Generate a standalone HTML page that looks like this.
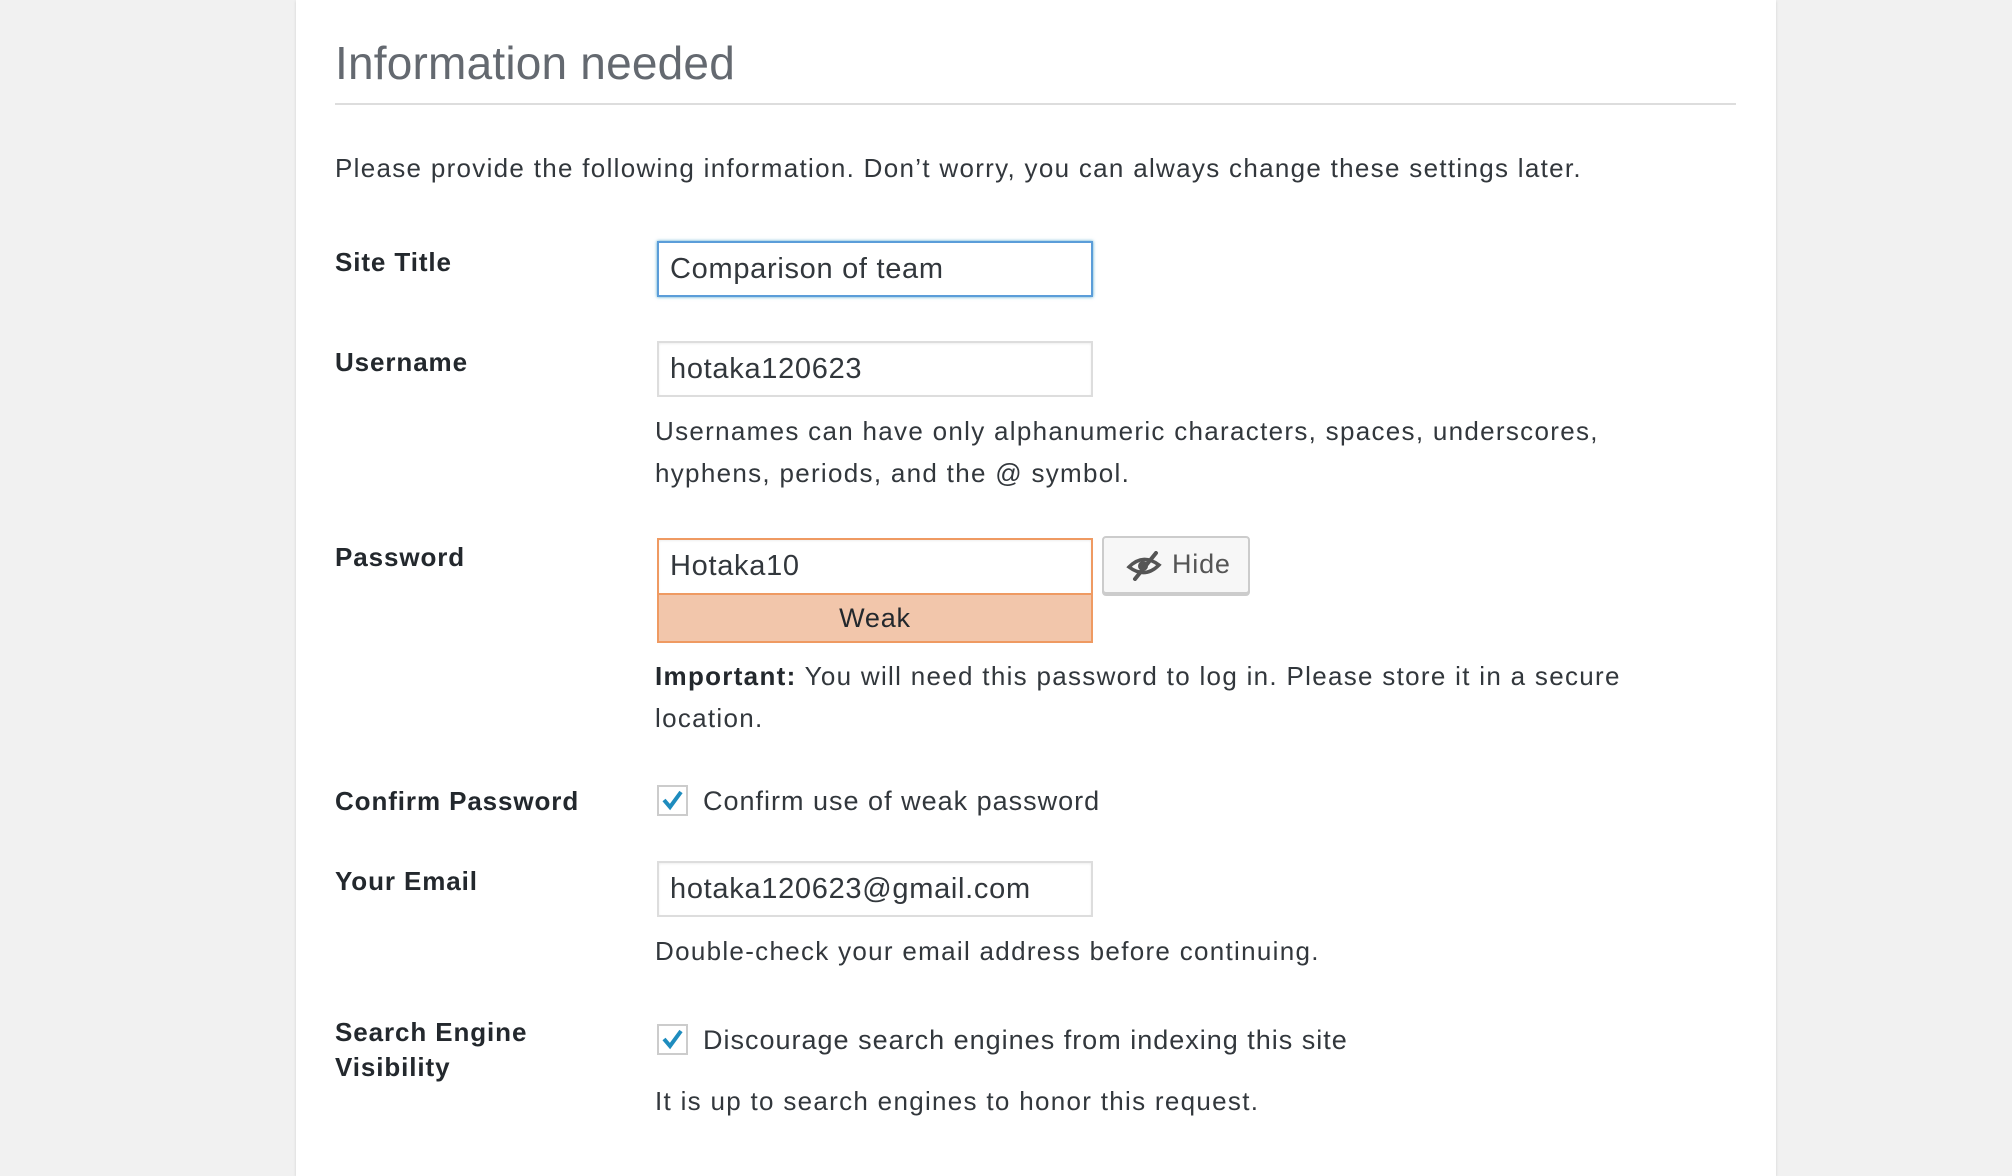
<!DOCTYPE html>
<html><head><meta charset="utf-8"><style>
body{margin:0;width:2012px;height:1176px;background:#f1f1f1;font-family:"Liberation Sans",sans-serif;color:#32373c;position:relative;overflow:hidden}
.panel{position:absolute;left:296px;top:0;width:1480px;height:1176px;background:#fff;box-shadow:0 1px 3px rgba(0,0,0,.13)}
.t{position:absolute;font-size:26px;line-height:1;white-space:nowrap;letter-spacing:1.3px}
.b{font-weight:bold;color:#23282d;letter-spacing:0.9px}
.in{position:absolute;left:657px;width:436px;height:56px;box-sizing:border-box;border:2px solid #ddd;background:#fff;font-size:29px;padding-left:11px;line-height:52px;color:#32373c;letter-spacing:0.7px;box-shadow:inset 0 1px 2px rgba(0,0,0,.07)}
.cb{position:absolute;left:657px;width:31px;height:31px;box-sizing:border-box;border:2px solid #ccc;background:#fff}
</style></head><body>
<div class="panel"></div>
<div class="t" style="left:335px;top:40px;font-size:46px;color:#646970;letter-spacing:0.2px">Information needed</div>
<div style="position:absolute;left:335px;top:103px;width:1401px;height:2px;background:#ddd"></div>
<div class="t" style="left:335px;top:155px">Please provide the following information. Don’t worry, you can always change these settings later.</div>

<div class="t b" style="left:335px;top:249px">Site Title</div>
<div class="in" style="top:241px;border-color:#5b9dd9;box-shadow:0 0 3px rgba(30,140,190,.8)">Comparison of team</div>

<div class="t b" style="left:335px;top:349px">Username</div>
<div class="in" style="top:341px">hotaka120623</div>
<div class="t" style="left:655px;top:418px">Usernames can have only alphanumeric characters, spaces, underscores,</div>
<div class="t" style="left:655px;top:460px">hyphens, periods, and the @ symbol.</div>

<div class="t b" style="left:335px;top:544px">Password</div>
<div class="in" style="top:538px;height:57px;border-color:#ef9a62;border-bottom:none">Hotaka10</div>
<div style="position:absolute;left:657px;top:593px;width:436px;height:50px;box-sizing:border-box;border:2px solid #ef9a62;background:#f2c6ab;text-align:center;font-size:27px;line-height:46px;color:#23282d;letter-spacing:0.8px">Weak</div>
<div style="position:absolute;left:1102px;top:536px;width:148px;height:58px;box-sizing:border-box;border:2px solid #ccc;border-radius:4px;background:#f7f7f7;box-shadow:0 2px 0 #ccc;font-size:27px;line-height:52px;color:#555;letter-spacing:0.8px">
<svg style="position:absolute;left:22px;top:13px" width="38" height="30" viewBox="0 0 38 30"><path d="M3 16 Q17 2 33 14 Q19 28 3 16Z" fill="none" stroke="#555" stroke-width="3.5"/><circle cx="17" cy="15" r="5" fill="#555"/><path d="M30 2 L9 28" stroke="#555" stroke-width="4" stroke-linecap="round"/></svg>
<span style="position:absolute;left:68px">Hide</span></div>
<div class="t" style="left:655px;top:663px"><b style="color:#23282d">Important:</b> You will need this password to log in. Please store it in a secure</div>
<div class="t" style="left:655px;top:705px">location.</div>

<div class="t b" style="left:335px;top:788px">Confirm Password</div>
<div class="cb" style="top:785px"><svg width="27" height="27" viewBox="0 0 27 27"><path d="M5 13 L11 20 L22 5" fill="none" stroke="#1e8cbe" stroke-width="4"/></svg></div>
<div class="t" style="left:703px;top:788px;font-size:27px;letter-spacing:1px">Confirm use of weak password</div>

<div class="t b" style="left:335px;top:868px">Your Email</div>
<div class="in" style="top:861px">hotaka120623@gmail.com</div>
<div class="t" style="left:655px;top:938px">Double-check your email address before continuing.</div>

<div class="t b" style="left:335px;top:1019px">Search Engine</div>
<div class="t b" style="left:335px;top:1054px">Visibility</div>
<div class="cb" style="top:1024px"><svg width="27" height="27" viewBox="0 0 27 27"><path d="M5 13 L11 20 L22 5" fill="none" stroke="#1e8cbe" stroke-width="4"/></svg></div>
<div class="t" style="left:703px;top:1027px;font-size:27px;letter-spacing:1px">Discourage search engines from indexing this site</div>
<div class="t" style="left:655px;top:1088px">It is up to search engines to honor this request.</div>
</body></html>
